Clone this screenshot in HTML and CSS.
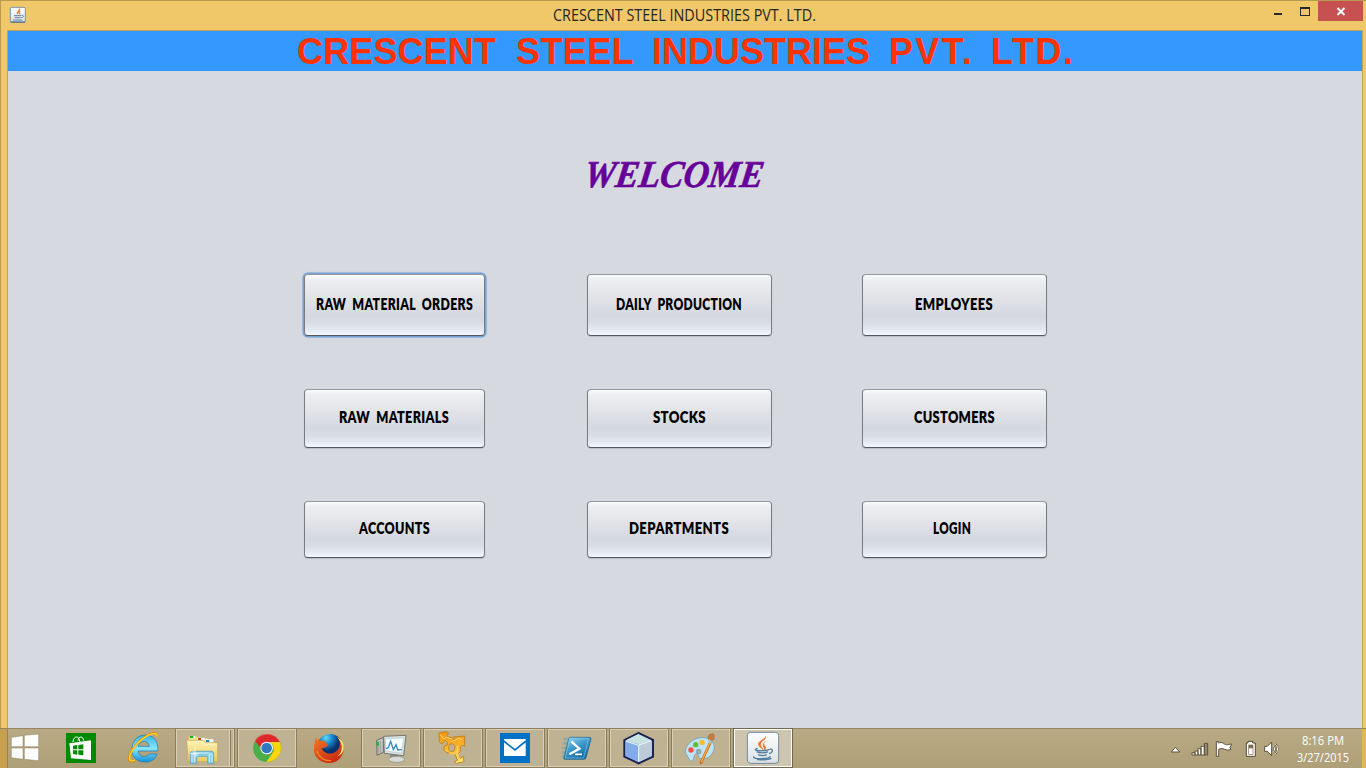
FILE: index.html
```html
<!DOCTYPE html>
<html lang="en">
<head>
<meta charset="utf-8">
<title>CRESCENT STEEL INDUSTRIES PVT. LTD.</title>
<link rel="stylesheet" href="styles.css">
</head>
<body>
<div class="window">
  <header class="titlebar">
    <svg class="app-icon" width="18" height="18" viewBox="0 0 54 54"><defs><linearGradient id="tile" x2="0" y2="1"><stop stop-color="#fff"/><stop offset="1" stop-color="#dbe0e5"/></linearGradient></defs><rect x="4" y="4" width="45" height="45" rx="4" fill="url(#tile)" stroke="#7b95a8" stroke-width="3"/><path d="M5 48h43" stroke="#3d607a" stroke-width="3"/><path d="M31 8c4 6-9 8-5 17M34 15c-5 3-4 5-1 10" fill="none" stroke="#ee8130" stroke-width="4"/><path d="M15 29h22M17 35h18M12 42h28M38 28c8-1 7 7-1 7" fill="none" stroke="#5b83a3" stroke-width="3"/></svg>
    <svg class="title" width="280" height="29"><text x="12" y="20" textLength="263" lengthAdjust="spacingAndGlyphs">CRESCENT STEEL INDUSTRIES PVT. LTD.</text></svg>
    <div class="controls">
      <svg width="50" height="20" viewBox="0 0 50 20"><path d="M6 12h8v2H6z" fill="#282828"/><path fill-rule="evenodd" d="M32 6h10v9H32zM33 8v6h8V8z" fill="#282828"/></svg>
      <button class="close" aria-label="Close"><svg width="45" height="20" viewBox="0 0 45 20"><path d="M19.5 7l7 7m0-7l-7 7" stroke="#fff" stroke-width="2"/></svg></button>
    </div>
  </header>
  <main class="client">
    <div class="banner"><svg width="1354" height="40"><text y="33"><tspan x="289" textLength="199">CRESCENT</tspan> <tspan x="508" textLength="117">STEEL</tspan> <tspan x="644" textLength="218">INDUSTRIES</tspan> <tspan x="881" textLength="83">PVT.</tspan> <tspan x="983" textLength="82">LTD.</tspan></text></svg></div>
    <svg class="welcome" width="200" height="50"><text transform="translate(7 36) skewX(-8)" textLength="179" lengthAdjust="spacingAndGlyphs">WELCOME</text></svg>
    <div class="menu">
      <button class="item focused"><svg width="181" height="62"><text x="12" y="36" textLength="157" lengthAdjust="spacingAndGlyphs">RAW MATERIAL ORDERS</text></svg></button>
      <button class="item"><svg width="185" height="62"><text x="29" y="36" textLength="126" lengthAdjust="spacingAndGlyphs">DAILY PRODUCTION</text></svg></button>
      <button class="item"><svg width="185" height="62"><text x="53" y="36" textLength="78" lengthAdjust="spacingAndGlyphs">EMPLOYEES</text></svg></button>
      <button class="item"><svg width="181" height="59"><text x="35" y="34" textLength="110" lengthAdjust="spacingAndGlyphs">RAW MATERIALS</text></svg></button>
      <button class="item"><svg width="185" height="59"><text x="66" y="34" textLength="53" lengthAdjust="spacingAndGlyphs">STOCKS</text></svg></button>
      <button class="item"><svg width="185" height="59"><text x="52" y="34" textLength="81" lengthAdjust="spacingAndGlyphs">CUSTOMERS</text></svg></button>
      <button class="item"><svg width="181" height="57"><text x="55" y="33" textLength="71" lengthAdjust="spacingAndGlyphs">ACCOUNTS</text></svg></button>
      <button class="item"><svg width="185" height="57"><text x="42" y="33" textLength="100" lengthAdjust="spacingAndGlyphs">DEPARTMENTS</text></svg></button>
      <button class="item"><svg width="185" height="57"><text x="71" y="33" textLength="38" lengthAdjust="spacingAndGlyphs">LOGIN</text></svg></button>
    </div>
  </main>
</div>
<footer class="taskbar">
  <div class="start"><svg width="50" height="40" viewBox="0 30 150 120"><path d="M34 58l35-5v33H34zM73 52l43-4v38H73zM34 90h35v34l-35-5zM73 90h43v38l-43-4z" fill="#fff" stroke="#8d7c59" stroke-width="1.5"/></svg></div>
  <div class="store"><svg width="62" height="40" viewBox="150 30 186 120"><path fill="#008a00" d="M198 45h90v90h-90z"/><path d="M219 72c0-16 16-21 19-7l2 7M234 68c1-16 17-13 17 0" fill="none" stroke="#fff" stroke-width="3"/><path d="M208 76l65-9v59l-60-5z" fill="#fff"/><path d="M219 83l13-2v13h-13zM235 81l15-2v15h-15zM219 97h13v13l-13-2zM235 97h15v15l-15-2z" fill="#008a00"/></svg></div>
  <div class="ie"><svg width="63" height="40" viewBox="336 30 189 120"><defs><linearGradient id="ie" x2="0" y2="1"><stop stop-color="#35b6ed"/><stop offset=".5" stop-color="#88e5fc"/><stop offset="1" stop-color="#168fd5"/></linearGradient></defs><path fill-rule="evenodd" d="M473 99h-58c2 19 24 21 33 9h23c-7 20-23 26-40 24-24-2-37-18-35-40 1-25 17-40 39-41 26 0 41 18 38 48zM415 85h33c-2-20-30-20-33 0z" fill="url(#ie)" stroke="#1679b3" stroke-width="2"/><path d="M407 126c-14 9-25 3-17-17 8-19 27-43 49-55 16-9 34-14 32 1" fill="none" stroke="#d99005" stroke-width="7"/><path d="M405 126c-15 7-21-2-13-19 11-24 33-45 52-55 13-7 29-8 27 3" fill="none" stroke="#ffd52e" stroke-width="4"/></svg></div>
  <div class="task grouped"><svg width="60" height="40" viewBox="15 30 180 120"><defs><linearGradient id="folder" x2="0" y2="1"><stop stop-color="#fff2b4"/><stop offset="1" stop-color="#e7c95e"/></linearGradient></defs><path d="M55 55h26l3 5h30v15H55z" fill="#f5dc83" stroke="#bda145"/><path d="M60 54h15v7H60zM82 59h22v8H82zM107 64h23v10h-23z" fill="#fff"/><path d="M60 54h10v6H60z" fill="#00b529"/><path d="M84 60h9v6h-9z" fill="#d44022"/><path d="M108 66h10v6h-10z" fill="#1789d4"/><path d="M50 67h50l5 7h38v57H55z" fill="url(#folder)" stroke="#c5a950" stroke-width="2"/><path d="M54 72h43l8 7h34" fill="none" stroke="#fff7c9" stroke-width="2"/><path d="M61 136v-31c0-5 9-5 9-5h51c8 0 10 2 10 8v28h-18v-18c0-4-33-4-33 0v18z" fill="#8acbe5" stroke="#4598c2" stroke-width="2"/><path d="M66 133v-25h8v25M118 133v-25h8v25M75 105h43" fill="none" stroke="#c9f0fc" stroke-width="3"/><path d="M75 88v30M60 106h28M65 96l20 20" stroke="#fff" stroke-width="2"/></svg></div>
  <div class="task"><svg width="60" height="40" viewBox="201 30 180 120"><circle cx="291" cy="90" r="42" fill="#4cae48"/><path d="M255 68a42 42 0 0 1 74 4h-38l-19 18z" fill="#dd282c"/><path d="M329 72a42 42 0 0 1-40 60l21-31c5-10 0-22-11-29z" fill="#ffd40b"/><circle cx="290" cy="90" r="19" fill="#f8fafb"/><circle cx="290" cy="90" r="16" fill="#3478c1"/><path d="M252 75c13-31 56-36 75-8" fill="none" stroke="#f27b71" stroke-width="2"/></svg></div>
  <div class="task plain"><svg width="60" height="40" viewBox="387 30 180 120"><defs><radialGradient id="globe" cx=".35" cy=".15"><stop stop-color="#5edcf6"/><stop offset=".5" stop-color="#1684c8"/><stop offset="1" stop-color="#09316f"/></radialGradient><linearGradient id="fox" x2=".6" y2="1"><stop stop-color="#f27b22"/><stop offset="1" stop-color="#c92b13"/></linearGradient></defs><circle cx="480" cy="87" r="39" fill="url(#globe)"/><path d="M435 65l5-7 1 11 6-9 2 9c11-3 18 0 19 7l8 4-8 8-13 3c5 15 28 22 44 9 14-12 14-29 3-43 13 8 20 22 19 38-3 26-22 40-44 40-28 0-48-21-45-46z" fill="url(#fox)"/><path d="M501 57c20 20 18 43 2 58 18-7 20-23 17-36-2-10-9-17-19-22z" fill="#ffe46f"/><path d="M440 98c8 21 25 31 43 30" fill="none" stroke="#f58828" stroke-width="4"/></svg></div>
  <div class="task"><svg width="60" height="40" viewBox="0 0 180 120"><path d="M47 37l20-9v45l-19 9z" fill="#c3c6c2" stroke="#6b6f69" stroke-width="3"/><path d="M52 42v34M58 40v34" stroke="#858b84" stroke-width="2"/><path d="M47 44h7M47 50h7" stroke="#00bf39" stroke-width="5"/><path d="M86 78h26l-2 12H88z" fill="#888c88"/><ellipse cx="107" cy="94" rx="24" ry="9" fill="#dadbd7" stroke="#858882" stroke-width="2"/><path d="M68 25l67-3-7 61-58-7z" fill="#dfe2de" stroke="#71766f" stroke-width="3"/><path d="M74 32l54-2-6 45-49-6z" fill="#f6fcff" stroke="#a3c7d9" stroke-width="2"/><path d="M75 62l7-3 7-19 8 25 8-15 5 16 12-1" fill="none" stroke="#348ac0" stroke-width="4"/></svg></div>
  <div class="task"><svg width="60" height="40" viewBox="186 0 180 120"><defs><linearGradient id="vm" x2="0" y2="1"><stop stop-color="#f69412"/><stop offset=".5" stop-color="#fcb62d"/><stop offset="1" stop-color="#ffec76"/></linearGradient></defs><path fill-rule="evenodd" d="M234 15l24-4 5 5-7 9 17 4 4 5 5-2-5-5 34-3v31l-7-4-6 6v12l-7 9 6 14 10-7 2 16-23 5-6-5 10-4-7-16-15-4-12-4-7-6V54l11-4-1-6-7-7-9 11-8-6zM265 49l-2 16 5 6 11-2 4-15-8-7z" fill="url(#vm)" stroke="#bf7919" stroke-width="2.5"/><path d="M237 19l12 14 7-6 16 6M271 41l26-11M295 36l9-4M289 54v18l7 22M265 77l14 2" fill="none" stroke="#ffd775" stroke-width="3"/></svg></div>
  <div class="task"><svg width="60" height="40" viewBox="390 30 180 120"><path fill="#0072c6" d="M435 45h90v90h-90z"/><path d="M447 65l33 24 32-24v49h-65z" fill="#fff"/><path d="M447 63h65v8l-32 27-33-26z" fill="#fff"/><path d="M446 69l34 27 33-27" fill="none" stroke="#0072c6" stroke-width="5"/></svg></div>
  <div class="task"><svg width="60" height="40" viewBox="21 30 180 120"><defs><linearGradient id="ps" x2=".6" y2="1"><stop stop-color="#a9e2f8"/><stop offset=".5" stop-color="#3e99cb"/><stop offset="1" stop-color="#1969a0"/></linearGradient></defs><path d="M83 63h-12M81 76H68M78 90H67M75 103h-9M72 116h-7" stroke="#4fa3bf" stroke-width="7" opacity=".5"/><path d="M91 58h57q6 0 5 5l-15 56q-1 5-7 5H75q-5 0-3-5l14-57q1-4 5-4z" fill="url(#ps)" stroke="#105885" stroke-width="2"/><path d="M90 61h56l-15 59H76z" fill="none" stroke="#7bcce8" stroke-width="2"/><path d="M94 70l24 22-30 17" fill="none" stroke="#fff" stroke-width="7"/><path d="M105 109h21" stroke="#fff" stroke-width="5"/></svg></div>
  <div class="task"><svg width="60" height="40" viewBox="207 30 180 120"><path d="M295 45l44 21v50l-43 20-43-20V66z" fill="#adc7e5" stroke="#1c2154" stroke-width="6"/><path d="M257 67l38-19 39 19-38 12z" fill="#c7e3df"/><path d="M257 68l39 11v53l-39-19z" fill="#83abea"/><path d="M296 79l39-11v45l-39 19z" fill="#bccbd6"/><path d="M258 70l38 12v49M296 81l37-12" fill="none" stroke="#edf8ff" stroke-width="3"/></svg></div>
  <div class="task"><svg width="60" height="40" viewBox="393 30 180 120"><path d="M437 106c-5-22 21-47 49-47 22-1 40 14 36 34-3 17-20 32-38 29-11-2-5-13-14-15-10-1-7 20-15 22-7 1-8-10-18-23z" fill="#bfe3f4" stroke="#609bbb" stroke-width="2"/><circle cx="453" cy="96" r="8" fill="#ef5144"/><circle cx="467" cy="80" r="8" fill="#60bd40"/><circle cx="486" cy="73" r="8" fill="#f6bc2e"/><circle cx="476" cy="101" r="7" fill="#9aada9" stroke="#6c949d" stroke-width="2"/><path d="M511 73L483 134" stroke="#c86b16" stroke-width="8" stroke-linecap="round"/><path d="M510 73l-26 59" stroke="#ffac43" stroke-width="4"/><path d="M505 65l-3-8 6-9 12-3 5 8-2 11-13 11z" fill="#bb7e49"/><path d="M506 65l8 10" stroke="#aec4c7" stroke-width="7"/></svg></div>
  <div class="task active"><svg width="60" height="40" viewBox="579 30 180 120"><rect x="622" y="43" width="94" height="93" rx="10" fill="url(#tile)" stroke="#70899d" stroke-width="3"/><path d="M677 53c6 15-25 16-11 35 2 4 6 6 3 8-21-17-18-21-3-31 5-4 10-6 11-12z" fill="#ed792d"/><path d="M685 67c-19 9-12 14-8 20 4 7-2 9-5 11 4-9-7-12-3-19 2-6 8-10 16-12z" fill="#ed792d"/><path d="M653 91c-24 8 19 10 36 3M650 101c8 5 28 4 34 0M655 110c7 4 19 4 25 0M690 93c10-1 10 10-3 14M643 116c-13 7 41 9 49-1M651 125c18 1 32 1 43-4" fill="none" stroke="#527ea0" stroke-width="4"/></svg></div>
  <div class="tray">
    <svg width="130" height="40" viewBox="45 30 390 120"><g stroke="#5e5137" stroke-width="3"><path d="M64 102l12-14 13 14z" fill="#fff"/><path d="M126 104h9v7h-9zM135 99h9v12h-9zM144 92h9v19h-9zM153 85h10v26h-10z" fill="#fff"/><path d="M163 76h10v35h-10z" fill="#8f8876"/><path d="M199 71h7v4c12-5 15 4 23 5 6 1 9-2 16-2l-5 11 3 5c-16 8-21-8-37 0v21h-7z" fill="#fff"/></g><path d="M294 75v-5h14v5h8v40h-27V75z" fill="#fff" stroke="#554a34" stroke-width="3"/><path d="M295 80h15v30h-15z" fill="#776b50"/><path d="M297 91h11v17h-11z" fill="#fff"/><path d="M344 85h8l13-13v41l-13-13h-8z" fill="#fff" stroke="#5e5137" stroke-width="3"/><path d="M370 85c5 5 5 11 0 16M376 79c9 8 9 20 0 28" fill="none" stroke="#5e5137" stroke-width="6"/><path d="M370 85c5 5 5 11 0 16M376 79c9 8 9 20 0 28" fill="none" stroke="#fff" stroke-width="3"/></svg>
    <svg class="clock" width="71" height="40"><text x="7" y="17" textLength="42" lengthAdjust="spacingAndGlyphs">8:16 PM</text><text x="2" y="34" textLength="52" lengthAdjust="spacingAndGlyphs">3/27/2015</text></svg>
  </div>
</footer>
</body>
</html>
```

FILE: styles.css
```css
* { box-sizing: border-box; }
body { margin: 0; width: 1366px; height: 768px; overflow: hidden; display: grid; grid-template-rows: 728px 40px; background: #f0c869; }
svg { display: block; flex: none; overflow: visible; }
button { border: 0; padding: 0; margin: 0; overflow: visible; }
.window { height: 728px; border: 1px solid #b89a50; border-width: 1px 0 0 1px; padding: 0 3px 0 6px; background: #f0c869; }
.titlebar { height: 29px; display: grid; grid-template-columns: 534px 280px 1fr; }
.app-icon { margin: 5px 0 0 2px; }
.title text { font: 15.5px "Open Sans", "Noto Sans", sans-serif; fill: #24251f; }
.controls { display: flex; justify-content: flex-end; }
.close { width: 45px; height: 20px; background: #c75050; }
.client { height: 698px; border: 1px solid #c2a558; border-bottom: 0; background: #d6d9e0; }
.banner { height: 40px; background: #39f; }
.banner text { font: bold 36px "Liberation Sans", Arial, sans-serif; fill: #f30; }
.welcome { margin: 80px 0 73px 568px; }
.welcome text { font: italic bold 38px "Brush Script MT", "Liberation Serif", cursive; fill: #609; stroke: #609; stroke-width: .6px; }
.menu { display: grid; grid-template-columns: 283px 275px 185px; grid-template-rows: 62px 59px 57px; row-gap: 53px; margin-left: 296px; }
.item { width: 185px; height: 100%; border: 1px solid #777b83; border-top-color: #94979e; border-bottom-color: #54575e; border-radius: 4px; background: linear-gradient(#fafbfc 0, #eeeff2 8%, #e1e3e7 38%, #d5d8df 67%, #d8dce4 79%, #e4e8ef 91%, #f5f8fd 100%); box-shadow: 0 1px 1px #b7bbc4; display: flex; align-items: center; justify-content: center; }
.item:nth-child(3n + 1) { width: 181px; }
.item text { font: 800 16.5px Lato, sans-serif; word-spacing: 4px; letter-spacing: .4px; fill: #000; }
.focused { box-shadow: 0 0 0 1.5px #76a3d0, 0 0 2px 1px #91b5da; }
.taskbar { height: 40px; display: flex; border-top: 1px solid #968561; background: linear-gradient(90deg, #c69f4f 0 7px, #9c8050 7px 8px, transparent 8px 1362px, #e1b653 1362px), linear-gradient(#b8aa84, #ae9f78); }
.taskbar svg { margin-top: -1px; }
.task { width: 60px; height: 40px; margin: -1px 2px 0 0; border: 1px solid #8a7c5c; background: #bfb292; box-shadow: inset 0 0 0 1px #d9cfb7; }
.task svg { margin: -1px 0 0 -1px; }
.plain { border-color: transparent; background: none; box-shadow: none; }
.grouped { background: linear-gradient(90deg, transparent 53px, #d9cfb7 53px 54px, #8a7c5c 54px 55px, transparent 55px), #bfb292; }
.active { border-color: #706751; background: #cec5b0; box-shadow: inset 0 0 0 1px #fff; }
.tray { display: flex; margin-left: auto; }
.clock text { font: 12px "Open Sans", "Noto Sans", sans-serif; fill: #fff; }
```
